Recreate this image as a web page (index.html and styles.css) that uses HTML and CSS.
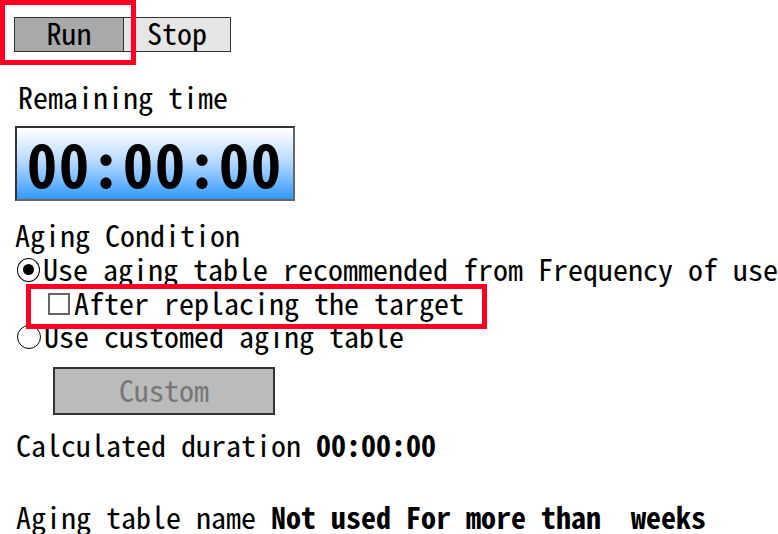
FILE: index.html
```html
<!DOCTYPE html>
<html>
<head>
<meta charset="utf-8">
<link rel="stylesheet" href="styles.css">
</head>
<body>
<div class="page">
  <div class="btn-row">
    <div class="btn btn-run">Run</div>
    <div class="btn btn-stop">Stop</div>
  </div>
  <div class="label label-remaining">Remaining time</div>
  <div class="timer"><span class="timer-text">00:00:00</span></div>
  <div class="label label-aging">Aging Condition</div>
  <div class="opt opt-1"><span class="radio checked"></span><span class="txt">Use aging table recommended from Frequency of use</span></div>
  <div class="opt opt-check"><span class="check"></span><span class="txt">After replacing the target</span></div>
  <div class="opt opt-2"><span class="radio"></span><span class="txt">Use customed aging table</span></div>
  <div class="btn-custom">Custom</div>
  <div class="label label-calc"><span class="txt">Calculated duration </span><span class="val">00:00:00</span></div>
  <div class="label label-name"><span class="txt">Aging table name </span><span class="val">Not used For more than  weeks</span></div>
  <div class="mark mark-run"></div>
  <div class="mark mark-check"></div>
</div>
</body>
</html>
```
FILE: styles.css
```css
html, body {
  margin: 0;
  padding: 0;
  background: #fff;
}
.page {
  position: relative;
  width: 778px;
  height: 534px;
  overflow: hidden;
  font-family: "Noto Sans Mono CJK KR", "Noto Sans CJK KR", "DejaVu Sans Mono", monospace;
  font-size: 30px;
  color: #000;
}
.txt, .val, .label {
  white-space: pre;
}
.btn-row {
  display: flex;
  padding: 17px 0 0 14px;
  height: 35px;
}
.btn {
  box-sizing: border-box;
  height: 35px;
  padding-bottom: 5px;
  border: 1px solid #333;
  display: flex;
  align-items: center;
  justify-content: center;
  line-height: 1;
}
.btn-run {
  width: 110px;
  background: #a9a9a9;
}
.btn-stop {
  width: 108px;
  margin-left: -1px;
  background: #e6e6e6;
}
.label {
  line-height: 34px;
  height: 34px;
}
.label-remaining {
  margin: 27px 0 0 18px;
}
.timer {
  box-sizing: border-box;
  margin: 13px 0 0 15px;
  width: 280px;
  height: 75px;
  padding-bottom: 4px;
  border: 2px solid #333;
  border-right-color: #666;
  border-bottom-color: #666;
  background: linear-gradient(to bottom, #ffffff 0%, #bcdcff 45%, #3399ff 100%);
  display: flex;
  align-items: center;
  justify-content: center;
}
.timer-text {
  font-weight: bold;
  font-size: 60px;
  letter-spacing: 2px;
  line-height: 1;
}
.label-aging {
  margin: 16px 0 0 15px;
}
.opt {
  line-height: 34px;
  height: 34px;
  margin-left: 14px;
  display: flex;
  align-items: center;
}
.opt-check {
  margin-left: 44px;
}
.opt-2 {
  margin-top: -1px;
}
.radio {
  position: relative;
  display: inline-block;
  box-sizing: border-box;
  width: 24px;
  height: 24px;
  margin: 3px 3px 0 3px;
  border: 1.5px solid #000;
  border-radius: 50%;
}
.radio.checked::after {
  content: "";
  position: absolute;
  left: 5px;
  top: 5px;
  width: 11px;
  height: 11px;
  border-radius: 50%;
  background: #000;
}
.check {
  display: inline-block;
  box-sizing: border-box;
  width: 22px;
  height: 22px;
  margin: 3px 4px 0 4px;
  border: 2px solid #666;
}
.btn-custom {
  box-sizing: border-box;
  margin: 15px 0 0 53px;
  width: 222px;
  height: 48px;
  padding-bottom: 5px;
  border: 2px solid #333;
  background: #bbbbbb;
  color: #777;
  display: flex;
  align-items: center;
  justify-content: center;
}
.label-calc {
  margin: 12px 0 0 16px;
}
.label-name {
  margin: 38px 0 0 16px;
}
.val {
  font-weight: bold;
}
.mark {
  position: absolute;
  box-sizing: border-box;
  border: 5px solid #ff0022;
}
.mark-run {
  left: 0;
  top: 0;
  width: 136px;
  height: 65px;
}
.mark-check {
  left: 26px;
  top: 284px;
  width: 461px;
  height: 45px;
}
```
